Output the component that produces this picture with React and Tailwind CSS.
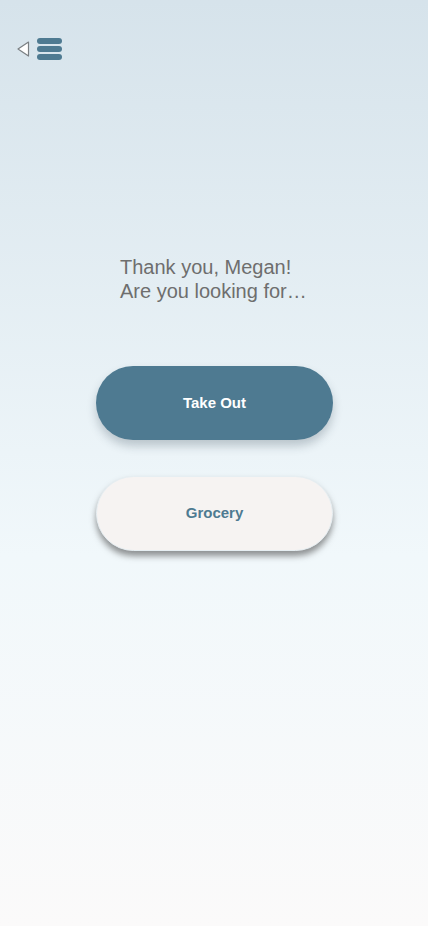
import React from 'react';

export default function App() {
  return (
    <div
      className="min-h-[926px] w-full flex flex-col bg-gradient-to-b from-[#d6e3eb] via-[#f1f8fb] via-60% to-[#fbfafa] font-['Liberation_Sans',Arial,sans-serif]"
    >
      {/* top nav */}
      <div className="flex items-center gap-[7px] pl-[17px] pt-[38px]">
        <svg width="13" height="16" viewBox="0 0 13 16">
          <path d="M11.5 1 L1 8 L11.5 15 Z" fill="#ffffff" stroke="#7a7f83" strokeWidth="1.2" strokeLinejoin="round" />
        </svg>
        <div className="flex flex-col gap-[2px]">
          <div className="w-[25px] h-[6px] rounded-full bg-[#4e7a91]" />
          <div className="w-[25px] h-[6px] rounded-full bg-[#4e7a91]" />
          <div className="w-[25px] h-[6px] rounded-full bg-[#4e7a91]" />
        </div>
      </div>

      {/* greeting */}
      <div className="pl-[120px] mt-[195px] text-[20px] leading-[24px] text-[#6e6e6e]">
        <p>Thank you, Megan!</p>
        <p>Are you looking for…</p>
      </div>

      {/* choices */}
      <div className="flex flex-col items-center gap-[36px] mt-[63px] pl-[1px]">
        <button className="w-[237px] h-[74px] rounded-full bg-[#4e7a91] text-white font-bold text-[15px] shadow-[0_6px_10px_rgba(40,60,75,0.25)]">
          Take Out
        </button>
        <button className="w-[237px] h-[75px] rounded-full bg-[#f6f3f2] text-[#4e7a91] font-bold text-[15px] border border-[#e6eef2] shadow-[0_5px_6px_rgba(60,60,60,0.55)]">
          Grocery
        </button>
      </div>
    </div>
  );
}
